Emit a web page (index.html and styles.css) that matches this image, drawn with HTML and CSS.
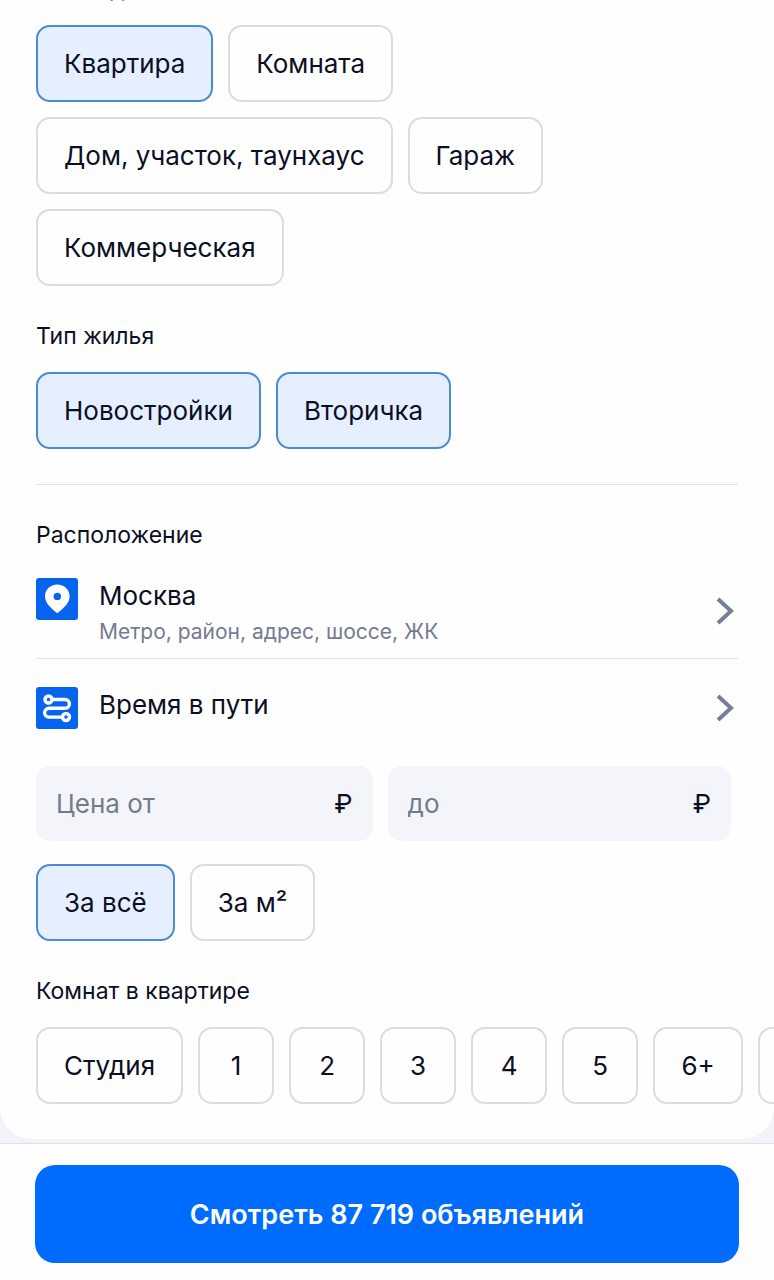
FILE: index.html
```html
<!DOCTYPE html>
<html lang="ru">
<head>
<meta charset="utf-8">
<meta name="viewport" content="width=device-width, initial-scale=1">
<title>Фильтры</title>
<link rel="stylesheet" href="styles.css">
</head>
<body>
<main class="sheet">
  <section class="group group-first">
    <h2 class="label">Тип недвижимости</h2>
    <div class="chips chips-narrow">
      <button class="chip selected" type="button">Квартира</button>
      <button class="chip" type="button">Комната</button>
      <button class="chip" type="button">Дом, участок, таунхаус</button>
      <button class="chip" type="button">Гараж</button>
      <button class="chip" type="button">Коммерческая</button>
    </div>
  </section>
  <section class="group">
    <h2 class="label">Тип жилья</h2>
    <div class="chips">
      <button class="chip selected" type="button">Новостройки</button>
      <button class="chip selected" type="button">Вторичка</button>
    </div>
  </section>
  <section class="group location">
    <h2 class="label">Расположение</h2>
    <button class="row row-city" type="button">
      <svg class="row-icon" viewBox="0 0 42 42" aria-hidden="true">
        <rect width="42" height="42" rx="3" fill="#0664ee"/>
        <path fill="#fff" fill-rule="evenodd" d="M21.300 6.500C14.200 6.500 9 11.700 9 18.300c0 8 8 13.300 12.300 17 4.300-3.700 12.300-9 12.300-17 0-6.600-5.200-11.800-12.300-11.800zm0 8.200a3.700 3.700 0 1 1 0 7.400 3.700 3.700 0 0 1 0-7.400z"/>
      </svg>
      <span class="row-text">
        <span class="row-title">Москва</span>
        <span class="row-note">Метро, район, адрес, шоссе, ЖК</span>
      </span>
      <svg class="chevron" viewBox="0 0 18 28" aria-hidden="true"><path d="M2 2l13 12L2 26"/></svg>
    </button>
    <button class="row row-time" type="button">
      <svg class="row-icon" viewBox="0 0 42 42" aria-hidden="true">
        <rect width="42" height="42" rx="3" fill="#0664ee"/>
        <g fill="none" stroke="#fff" stroke-width="3.400">
          <circle cx="12.500" cy="12.500" r="3.500"/>
          <circle cx="30" cy="30" r="3.500"/>
          <path d="M16 12.500h13a4.400 4.400 0 0 1 0 8.800H13a4.400 4.400 0 0 0 0 8.800h13.500"/>
        </g>
      </svg>
      <span class="row-title">Время в пути</span>
      <svg class="chevron" viewBox="0 0 18 28" aria-hidden="true"><path d="M2 2l13 12L2 26"/></svg>
    </button>
  </section>
  <section class="price">
    <div class="fields">
      <label class="field"><input type="text" inputmode="numeric" placeholder="Цена от" aria-label="Цена от"><span>₽</span></label>
      <label class="field"><input type="text" inputmode="numeric" placeholder="до" aria-label="Цена до"><span>₽</span></label>
    </div>
    <div class="chips">
      <button class="chip selected" type="button">За всё</button>
      <button class="chip" type="button">За м²</button>
    </div>
  </section>
  <section class="group">
    <h2 class="label">Комнат в квартире</h2>
    <div class="chips chips-scroll">
      <button class="chip" type="button">Студия</button>
      <button class="chip digit" type="button">1</button>
      <button class="chip digit" type="button">2</button>
      <button class="chip digit" type="button">3</button>
      <button class="chip digit" type="button">4</button>
      <button class="chip digit" type="button">5</button>
      <button class="chip digit-plus" type="button">6+</button>
      <button class="chip" type="button" aria-label="Ещё"></button>
    </div>
  </section>
</main>
<footer class="footer">
  <button class="submit" type="button">Смотреть 87 719 объявлений</button>
</footer>
</body>
</html>
```
FILE: styles.css
```css
* { box-sizing: border-box; }
body {
  margin: 0;
  background: #f3f4f9;
  color: #0b0f24;
  font-family: Inter, "Noto Sans", sans-serif;
  overflow-x: hidden;
}
button, input { font: inherit; color: inherit; }
button { cursor: pointer; }
.sheet {
  background: #fefefe;
  border-radius: 0 0 32px 32px;
  padding: 0 36px 35px;
  overflow: hidden;
}
.group { padding-top: 35px; }
.group-first { padding-top: 0; margin-top: -26px; }
.label {
  margin: 0 0 21px;
  font-size: 23px;
  line-height: 30px;
  font-weight: 400;
}
.chips { display: flex; flex-wrap: wrap; gap: 15px; }
.chips-narrow { max-width: 560px; }
.chips-scroll { flex-wrap: nowrap; margin-right: -36px; overflow: hidden; }
.chip {
  flex: none;
  height: 77px;
  padding: 0 26px;
  border: 2px solid #dadbe5;
  border-radius: 14px;
  background: #fefefe;
  font-size: 26px;
  line-height: 34px;
}
.chip.selected { background: #e5efff; border-color: #4a8bd4; }
.digit { width: 76px; padding: 0; }
.digit-plus { width: 90px; padding: 0; }
.location { margin-top: 35px; border-top: 1px solid #e3e4e8; }
.location .label { margin-bottom: 28px; }
.row {
  display: flex;
  align-items: flex-start;
  gap: 21px;
  width: 100%;
  padding: 0;
  border: 0;
  background: none;
  text-align: left;
}
.row-city { height: 81px; border-bottom: 1px solid #e3e4e8; }
.row-time { padding-top: 28px; }
.row-icon { flex: none; width: 42px; height: 42px; }
.row-text { display: flex; flex-direction: column; gap: 4px; }
.row-title { font-size: 26px; line-height: 35px; }
.row-note { font-size: 21px; line-height: 30px; color: #747b92; }
.chevron {
  flex: none;
  width: 18px;
  height: 28px;
  margin: 7px 4px 0 auto;
  fill: none;
  stroke: #758097;
  stroke-width: 4;
}
.row-city .chevron { margin-top: 19px; }
.price { padding-top: 37px; }
.fields {
  display: grid;
  grid-template-columns: 49fr 50fr;
  gap: 15px;
  margin: 0 7px 23px 0;
}
.field {
  display: flex;
  align-items: center;
  min-width: 0;
  height: 75px;
  padding: 0 20px;
  border-radius: 14px;
  background: #f4f5fa;
  font-size: 26px;
}
.field input { flex: 1; min-width: 0; padding: 0; border: 0; outline: 0; background: none; }
.field input::placeholder { color: #747b8e; opacity: 1; }
.footer { margin-top: 4px; padding: 21px 35px 17px; border-top: 1px solid #dfe0e8; background: #fefefe; }
.submit {
  width: 100%;
  height: 98px;
  border: 0;
  border-radius: 20px;
  background: #006bff;
  color: #fff;
  font-size: 27px;
  font-weight: 600;
}
```
